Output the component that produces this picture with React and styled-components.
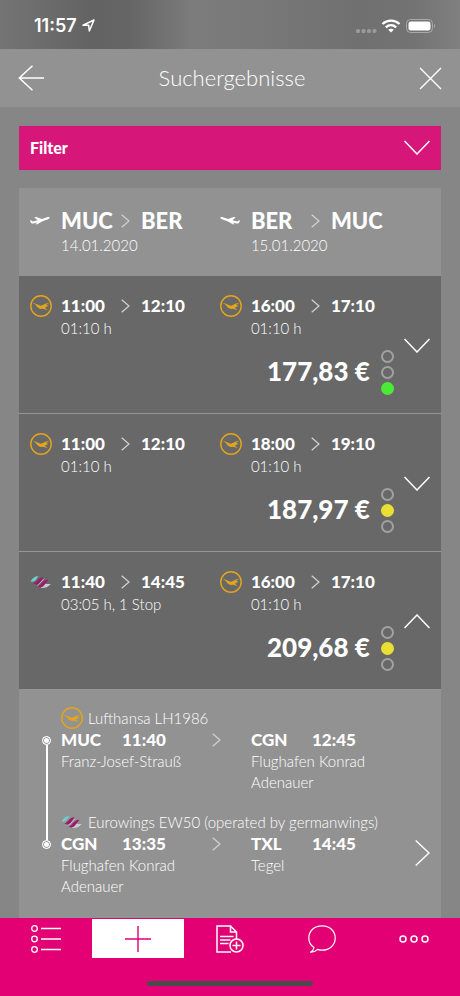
import React, { useState } from "react";
import styled, { createGlobalStyle, css } from "styled-components";

const theme = {
  magenta: "#e20074",
  filter: "#d61678",
  page: "#868686",
  panel: "#929292",
  row: "#686868",
  line: "#959595",
  soft: "#fff",
  amber: "#e5a51a",
  fontSizes: {
    small: "15px",
    medium: "17px",
    large: "22px",
    price: "26px",
  },
};

const GlobalStyle = createGlobalStyle`
  * {
    box-sizing: border-box;
  }
  body {
    margin: 0;
    background: ${theme.page};
    color: #fff;
    font-family: Lato, "Open Sans", sans-serif;
  }
  h1, h2, p, ol, ul {
    margin: 0;
    padding: 0;
    font-weight: 400;
  }
  ol, ul {
    list-style: none;
  }
  button {
    border: 0;
    padding: 0;
    background: none;
    color: inherit;
    font: inherit;
    cursor: pointer;
  }
  svg {
    display: block;
  }
`;

const Screen = styled.div`
  display: flex;
  flex-direction: column;
  height: 100vh;
`;

const StatusBar = styled.div`
  display: flex;
  align-items: center;
  justify-content: space-between;
  flex: none;
  height: 49px;
  padding: 2px 24px 0 34px;
  background: linear-gradient(90deg, #747474 0%, #636363 20%, #656565 28%, #7c7c7c 42%, #797979 55%, #707070 78%, #737373 90%, #808080 100%);
`;

const StatusGroup = styled.div`
  display: flex;
  align-items: center;
  gap: 5px;
`;

const Clock = styled.span`
  font-family: Inter, sans-serif;
  font-size: 18px;
  font-weight: 600;
`;

const Header = styled.header`
  display: flex;
  align-items: center;
  justify-content: space-between;
  flex: none;
  height: 58px;
  padding: 0 18px;
  background: ${theme.panel};
`;

const Title = styled.h1`
  font-size: 22px;
  font-weight: 300;
  line-height: 28px;
`;

const Content = styled.main`
  flex: 1;
  min-height: 0;
  padding: 19px 19px 0;
  overflow-y: auto;
  scrollbar-width: none;
`;

const FilterButton = styled.button`
  display: flex;
  align-items: center;
  justify-content: space-between;
  width: 100%;
  height: 44px;
  margin-bottom: 18px;
  padding: 0 11px 2px;
  background: ${theme.filter};
  font-size: 16px;
  font-weight: 900;
`;

const Results = styled.section`
  background: ${theme.panel};
`;

const columns = css`
  display: grid;
  grid-template-columns: 9fr 9fr 2fr;
`;

const RouteHeader = styled.div`
  ${columns}
  height: 88px;
  padding-top: 20px;
`;

const Row = styled.article`
  ${columns}
  row-gap: 11px;
  padding: 19px 0 18px;
  background: ${theme.row};
  & + & {
    border-top: 1px solid ${theme.line};
  }
`;

const LegGrid = styled.div`
  display: grid;
  grid-template-columns: 31px 60px 20px auto;
  justify-content: start;
  align-items: center;
  padding-left: 11px;
`;

const Code = styled.strong`
  font-size: ${theme.fontSizes.large};
  line-height: 26px;
  font-weight: 900;
`;

const Time = styled.strong`
  font-size: ${theme.fontSizes.medium};
  line-height: 22px;
  font-weight: 900;
`;

const Note = styled.p`
  grid-column: 2 / -1;
  color: ${theme.soft};
  font-size: ${theme.fontSizes.small};
  font-weight: 300;
  line-height: 22px;
`;

const Toggle = styled.button`
  grid-column: 3;
  grid-row: 1 / span 2;
  align-self: center;
  justify-self: end;
  padding: 12px 11px 12px 0;
`;

const PriceLine = styled.div`
  grid-column: 1 / span 2;
  grid-row: 2;
  display: flex;
  align-items: flex-start;
  justify-content: flex-end;
  gap: 11px;
  padding-right: 5px;
`;

const Price = styled.strong`
  font-size: ${theme.fontSizes.price};
  line-height: 42px;
  font-weight: 900;
`;

const Lights = styled.div`
  display: grid;
  gap: 3px;
`;

const Light = styled.span`
  width: 13px;
  height: 13px;
  border: 2px solid ${(props) => props.$color || "#a2a2a2"};
  border-radius: 50%;
  background: ${(props) => props.$color || "transparent"};
`;

const Details = styled.div`
  display: flex;
  align-items: center;
  border-top: 1px solid ${theme.line};
`;

const Segments = styled.ol`
  flex: 1;
  padding: 17px 0 101px;
`;

const SegmentItem = styled.li`
  display: grid;
  grid-template-columns: 42px 1fr;
`;

const Rail = styled.div`
  display: flex;
  flex-direction: column;
  align-items: center;
  padding-left: 13px;
`;

const RailLine = styled.span`
  width: 2px;
  height: ${(props) => (props.$grow ? "auto" : "29px")};
  flex: ${(props) => (props.$grow ? 1 : "none")};
  background: ${(props) => (props.$hidden ? "transparent" : theme.soft)};
`;

const RailDot = styled.span`
  width: 9px;
  height: 9px;
  border: 1px solid #fff;
  border-radius: 50%;
  background: #fff;
  box-shadow: inset 0 0 0 1px ${theme.panel};
`;

const SegmentBody = styled.div`
  min-height: 104px;
`;

const Carrier = styled.p`
  display: flex;
  align-items: center;
  gap: 5px;
  height: 22px;
  color: ${theme.soft};
  font-size: ${theme.fontSizes.small};
  font-weight: 300;
`;

const Stops = styled.div`
  display: grid;
  grid-template-columns: 151px 39px 1fr;
  align-items: start;
`;

const StopHead = styled.div`
  display: grid;
  grid-template-columns: 61px auto;
  justify-content: start;
`;

const Airport = styled.p`
  max-width: 130px;
  color: ${theme.soft};
  font-size: ${theme.fontSizes.small};
  font-weight: 300;
  line-height: 21px;
`;

const ArrowCell = styled.span`
  padding-top: 4px;
`;

const NextButton = styled.button`
  padding: 12px 11px 12px 0;
`;

const TabBar = styled.nav`
  flex: none;
  height: 78px;
  padding-top: 1px;
  background: ${theme.magenta};
`;

const Tabs = styled.ul`
  display: grid;
  grid-template-columns: repeat(5, 1fr);
`;

const TabButton = styled.button`
  display: flex;
  align-items: center;
  justify-content: center;
  width: 100%;
  height: 39px;
  background: ${(props) => (props.$active ? "#fff" : "transparent")};
  color: ${(props) => (props.$active ? theme.magenta : "#fff")};
`;

const HomeIndicator = styled.div`
  width: 36%;
  height: 5px;
  margin: 23px auto 0;
  border-radius: 3px;
  background: #4b4b4b;
`;

const Chevron = ({ up }) => (
  <svg width="26" height="15" viewBox="0 0 26 15" fill="none" stroke="#fff" strokeWidth="1.5">
    <path d={up ? "M.5 14 13 1 25.5 14" : "M.5 1 13 14 25.5 1"} />
  </svg>
);

const SmallArrow = () => (
  <svg width="9" height="14" viewBox="0 0 9 14" fill="none" stroke="#d2d2d2" strokeWidth="1.2">
    <path d="M.7.7 8 7 .7 13.3" />
  </svg>
);

const BigArrow = () => (
  <svg width="15" height="26" viewBox="0 0 15 26" fill="none" stroke="#fff" strokeWidth="1.4">
    <path d="M.7.5 14 13 .7 25.5" />
  </svg>
);

const Plane = ({ landing }) => (
  <svg width="20" height="10" viewBox="0 0 20 10" fill="#fff">
    <g transform={landing ? "matrix(-1 0 0 1 20 0)" : undefined}>
      <path d="M0 4.4 1.200 4.200C1.800 5.300 2.600 5.600 3.800 5.300L7.600 4.300 4.200 1.300 6.200.9 12 3.100 17 1.300C18.600.8 19.800 1 19.700 1.800 19.600 2.500 18.600 3 17.500 3.400L12.500 5.200 7.300 8.200 5.200 8.300 7.600 6.500 3.400 7.500C1.600 7.800.4 6.500 0 4.400Z" />
    </g>
  </svg>
);

const Lufthansa = () => (
  <svg width="22" height="22" viewBox="0 0 22 22">
    <circle cx="11" cy="11" r="10.2" fill="none" stroke={theme.amber} strokeWidth="1.4" />
    <path
      fill={theme.amber}
      d="M2.800 8C6 8.400 8.200 9.900 10.400 10.700 12.300 10.800 14.800 8.100 19.300 7.700L15.700 10.100 19 9.700 15.700 11.400 18.400 11.300 14.800 12.800 17.800 15 12.800 13.800C9.500 14.400 8 12.700 6.600 10.900 5.500 9.600 4.300 8.900 2.800 8Z"
    />
  </svg>
);

const Eurowings = () => (
  <svg width="22" height="22" viewBox="0 0 22 22">
    <path fill="#71cdd0" d="M.5 10.500C3 6 5.500 4.800 8.500 5.200L5.500 9.200C4 10.700 2.500 10.800.5 10.500Z" />
    <path fill="#c9cdd1" d="M10 15C12.500 11.500 14.500 13 20.800 13 17 16.700 14.500 17.200 11 16.900Z" />
    <path fill="#9b1b68" d="M3.500 12.500C7 12 8.500 5.800 13.500 6.300L11 10.100C9.300 12.700 7.500 14.700 3.500 12.500Z" />
    <path fill="#9b1b68" d="M7.500 15.500C11.500 14.500 13 8 18.500 8.700L15.500 12.500C13.500 15.400 12 17.800 7.500 15.500Z" />
    <path d="M7.500 14.700 14 7.800" stroke="#dcb9ce" strokeWidth=".8" />
  </svg>
);

const logos = { lufthansa: Lufthansa, eurowings: Eurowings };

const BackIcon = () => (
  <svg width="27" height="26" viewBox="0 0 27 26" fill="none" stroke="#fff" strokeWidth="1.5">
    <path d="M14.5.7 1.300 13 14.5 25.300M1.300 13H26" />
  </svg>
);

const CloseIcon = () => (
  <svg width="23" height="23" viewBox="0 0 23 23" fill="none" stroke="#fff" strokeWidth="1.4">
    <path d="M1 1 22 22M22 1 1 22" />
  </svg>
);

const LocationIcon = () => (
  <svg width="13" height="13" viewBox="0 0 13 13" fill="none" stroke="#fff" strokeWidth="1.5" strokeLinejoin="round">
    <path d="M1 6.200 12 1 7.300 12 6.700 6.300Z" />
  </svg>
);

const StatusIcons = () => (
  <svg width="81" height="16" viewBox="0 0 81 16">
    <g fill="#999">
      <rect x="1" y="11" width="4" height="4" rx="1.5" />
      <rect x="6.500" y="11" width="4" height="4" rx="1.5" />
      <rect x="12" y="11" width="4" height="4" rx="1.5" />
      <rect x="17.500" y="11" width="4" height="4" rx="1.5" />
    </g>
    <g fill="none" stroke="#fff" strokeWidth="2.3">
      <path d="M27.500 6C32.300 1.400 39.700 1.400 44.500 6" />
      <path d="M30.800 9.300C33.900 6.500 38.100 6.500 41.200 9.300" />
    </g>
    <path fill="#fff" d="M33.200 11.700C34.900 10.300 37.100 10.300 38.800 11.700L36 14.600Z" />
    <rect x="51.500" y="1.500" width="26" height="13" rx="4" fill="none" stroke="#a9a9a9" />
    <rect x="53.500" y="3.500" width="22" height="9" rx="2.200" fill="#fff" />
    <path fill="#a9a9a9" d="M79 6C80.500 6.500 80.500 9.500 79 10Z" />
  </svg>
);

const ListIcon = () => (
  <svg width="30" height="28" viewBox="0 0 30 28" fill="none" stroke="currentColor" strokeWidth="1.3">
    <circle cx="3.500" cy="3.500" r="2.800" />
    <circle cx="3.500" cy="14" r="2.800" />
    <circle cx="3.500" cy="24.500" r="2.800" />
    <path d="M10 3.500H30M10 14H30M10 24.500H30" />
  </svg>
);

const PlusIcon = () => (
  <svg width="26" height="26" viewBox="0 0 26 26" fill="none" stroke="currentColor" strokeWidth="1.4">
    <path d="M13 0V26M0 13H26" />
  </svg>
);

const DocumentIcon = () => (
  <svg width="28" height="28" viewBox="0 0 28 28" fill="none" stroke="currentColor" strokeWidth="1.5">
    <path d="M15 27H1V1H14.500L20.500 7V14M14.500 1V7H20.500M4 11.500H17.500M4 15H14.500M4 18.500H12.500" />
    <circle cx="20.500" cy="20.500" r="6.500" />
    <path d="M20.500 16.500V24.500M16.500 20.500H24.500" />
  </svg>
);

const ChatIcon = () => (
  <svg width="28" height="28" viewBox="0 0 28 28" fill="none" stroke="currentColor" strokeWidth="1.2" strokeLinejoin="round">
    <path d="M6 22.500C2.500 20.200.8 17 .8 13 .8 6 6.300.8 14 .8S27.200 6 27.200 13 21.700 25.200 14 25.200C12.300 25.200 10.900 24.900 9.600 24.400 7.500 26.500 5.200 27.400 2.500 27.200 4.500 26.300 5.600 24.800 6 22.500Z" />
  </svg>
);

const MoreIcon = () => (
  <svg width="30" height="8" viewBox="0 0 30 8" fill="none" stroke="currentColor" strokeWidth="1.5">
    <circle cx="4" cy="4" r="3" />
    <circle cx="15" cy="4" r="3" />
    <circle cx="26" cy="4" r="3" />
  </svg>
);

const routes = [
  { from: "MUC", to: "BER", date: "14.01.2020" },
  { from: "BER", to: "MUC", date: "15.01.2020", landing: true },
];

const lightColors = ["#e2382c", "#e9df35", "#4bea36"];

const flights = [
  {
    price: "177,83 €",
    light: 2,
    legs: [
      { airline: "lufthansa", from: "11:00", to: "12:10", note: "01:10 h" },
      { airline: "lufthansa", from: "16:00", to: "17:10", note: "01:10 h" },
    ],
  },
  {
    price: "187,97 €",
    light: 1,
    legs: [
      { airline: "lufthansa", from: "11:00", to: "12:10", note: "01:10 h" },
      { airline: "lufthansa", from: "18:00", to: "19:10", note: "01:10 h" },
    ],
  },
  {
    price: "209,68 €",
    light: 1,
    legs: [
      { airline: "eurowings", from: "11:40", to: "14:45", note: "03:05 h, 1 Stop" },
      { airline: "lufthansa", from: "16:00", to: "17:10", note: "01:10 h" },
    ],
    segments: [
      {
        airline: "lufthansa",
        carrier: "Lufthansa LH1986",
        from: { code: "MUC", time: "11:40", airport: "Franz-Josef-Strauß" },
        to: { code: "CGN", time: "12:45", airport: "Flughafen Konrad Adenauer" },
      },
      {
        airline: "eurowings",
        carrier: "Eurowings EW50 (operated by germanwings)",
        from: { code: "CGN", time: "13:35", airport: "Flughafen Konrad Adenauer" },
        to: { code: "TXL", time: "14:45", airport: "Tegel" },
      },
    ],
  },
];

const tabs = [
  { label: "Liste", icon: ListIcon },
  { label: "Neu", icon: PlusIcon },
  { label: "Dokument", icon: DocumentIcon },
  { label: "Chat", icon: ChatIcon },
  { label: "Mehr", icon: MoreIcon },
];

const Leg = ({ airline, from, to, note }) => {
  const Logo = logos[airline];
  return (
    <LegGrid>
      <Logo />
      <Time>{from}</Time>
      <SmallArrow />
      <Time>{to}</Time>
      <Note>{note}</Note>
    </LegGrid>
  );
};

const Stop = ({ code, time, airport }) => (
  <div>
    <StopHead>
      <Time>{code}</Time>
      <Time>{time}</Time>
    </StopHead>
    <Airport>{airport}</Airport>
  </div>
);

const Segment = ({ segment, first, last }) => {
  const Logo = logos[segment.airline];
  return (
    <SegmentItem>
      <Rail>
        <RailLine $hidden={first} />
        <RailDot />
        <RailLine $grow $hidden={last} />
      </Rail>
      <SegmentBody>
        <Carrier><Logo />{segment.carrier}</Carrier>
        <Stops>
          <Stop {...segment.from} />
          <ArrowCell><SmallArrow /></ArrowCell>
          <Stop {...segment.to} />
        </Stops>
      </SegmentBody>
    </SegmentItem>
  );
};

const Flight = ({ flight, open, onToggle }) => (
  <>
    <Row>
      {flight.legs.map((leg, i) => (
        <Leg key={i} {...leg} />
      ))}
      <PriceLine>
        <Price>{flight.price}</Price>
        <Lights>
          {lightColors.map((color, i) => (
            <Light key={color} $color={i === flight.light ? color : null} />
          ))}
        </Lights>
      </PriceLine>
      <Toggle aria-label="Details" aria-expanded={open} onClick={onToggle}>
        <Chevron up={open} />
      </Toggle>
    </Row>
    {open && flight.segments && (
      <Details>
        <Segments>
          {flight.segments.map((segment, i) => (
            <Segment key={i} segment={segment} first={i === 0} last={i === flight.segments.length - 1} />
          ))}
        </Segments>
        <NextButton aria-label="Weiter"><BigArrow /></NextButton>
      </Details>
    )}
  </>
);

const App = () => {
  const [openFlight, setOpenFlight] = useState(2);
  const [activeTab, setActiveTab] = useState(1);

  return (
    <Screen>
      <GlobalStyle />
      <StatusBar>
        <StatusGroup>
          <Clock>11:57</Clock>
          <LocationIcon />
        </StatusGroup>
        <StatusIcons />
      </StatusBar>
      <Header>
        <button aria-label="Zurück"><BackIcon /></button>
        <Title>Suchergebnisse</Title>
        <button aria-label="Schließen"><CloseIcon /></button>
      </Header>
      <Content>
        <FilterButton>
          Filter
          <Chevron />
        </FilterButton>
        <Results>
          <RouteHeader>
            {routes.map((route) => (
              <div key={route.date}>
                <LegGrid>
                  <Plane landing={route.landing} />
                  <Code>{route.from}</Code>
                  <SmallArrow />
                  <Code>{route.to}</Code>
                  <Note>{route.date}</Note>
                </LegGrid>
              </div>
            ))}
          </RouteHeader>
          {flights.map((flight, i) => (
            <Flight
              key={i}
              flight={flight}
              open={openFlight === i}
              onToggle={() => setOpenFlight(openFlight === i ? null : i)}
            />
          ))}
        </Results>
      </Content>
      <TabBar>
        <Tabs>
          {tabs.map(({ label, icon: Icon }, i) => (
            <li key={label}>
              <TabButton aria-label={label} $active={i === activeTab} onClick={() => setActiveTab(i)}>
                <Icon />
              </TabButton>
            </li>
          ))}
        </Tabs>
        <HomeIndicator />
      </TabBar>
    </Screen>
  );
};

export default App;
